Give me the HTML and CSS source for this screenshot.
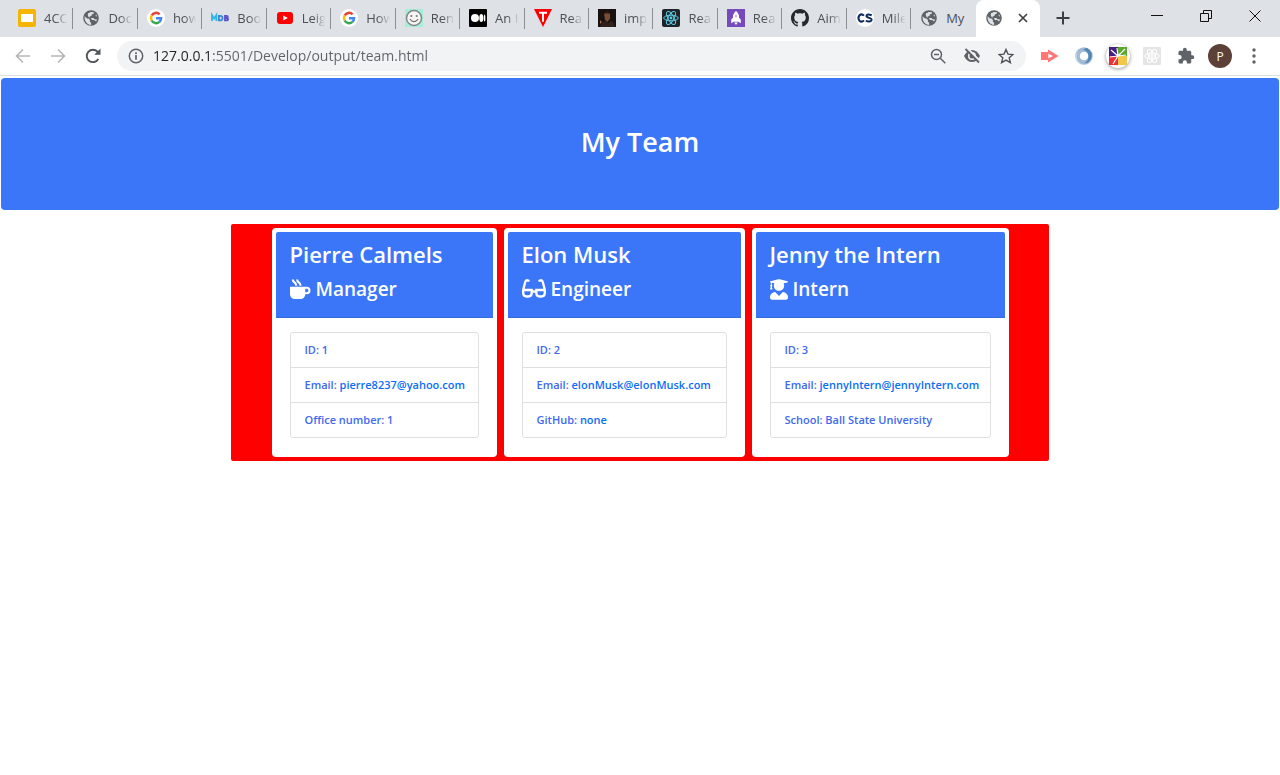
FILE: index.html
```html
<!DOCTYPE html>
<html lang="en">
<head>
<meta charset="utf-8">
<title>My Team</title>
<link rel="stylesheet" href="styles.css">
</head>
<body>
<svg class="defs" aria-hidden="true">
  <symbol id="globe" viewBox="0 0 18 18"><circle cx="9" cy="9" r="7.800" fill="#5f6368"/><path d="M2.600 7.200 5 9.400l1.600.2 1.300 1.500v1.600l1.200 1.100v2.100C5.300 15.900 2.300 12.600 2.600 7.200zM8 3.200c1.400-.5 3-.3 4.200.3l-.8 1.400-1.500.4-.5 1.700-1.900.5.4 1.400 3.600.1 1 1.300 2.500.1c.2-1 .3-2 .1-3l-1.500-.5.4-1.600c1.700 2.300 1.700 5.200.1 7.300l-2-1.500-2.200-.2-.8-1.700-2.600-1.200-.8-2.200.5-1.700 1.200-.1z" fill="#dee1e6"/></symbol>
  <symbol id="google" viewBox="0 0 18 18"><circle cx="9" cy="9" r="9" fill="#fff"/><g fill="none" stroke-width="2.500"><path d="M4.600 6.500A5.100 5.100 0 0 1 12.600 5.300" stroke="#ea4335"/><path d="M4.600 11.500a5.100 5.100 0 0 1 0-5" stroke="#fbbc05"/><path d="M12.400 12.900a5.100 5.100 0 0 1-7.800-1.400" stroke="#34a853"/><path d="M9 9.200h5.100a5.100 5.100 0 0 1-1.700 3.700" stroke="#4285f4"/></g></symbol>
</svg>

<header class="browser">
  <div class="strip">
    <nav class="tabs" aria-label="Tabs">
      <button class="tab"><svg viewBox="0 0 18 18"><rect width="18" height="18" rx="2" fill="#f4b400"/><rect x="3" y="5" width="12" height="8" fill="#fff"/></svg><span>4CC</span></button>
      <button class="tab"><svg><use href="#globe"/></svg><span>Doc</span></button>
      <button class="tab"><svg><use href="#google"/></svg><span>how</span></button>
      <button class="tab"><svg viewBox="0 0 18 18" fill="none" stroke-width="1.800"><path d="M1 12V6l2.200 3.500L5.400 6v6" stroke="#31b5e8"/><path d="M7.900 6.800h1.300q2.300 0 2.300 2.300t-2.300 2.200H7.900z" stroke="#3586d8"/><path d="M14 6.800h1.500q1.300 0 1.300 1t-1.300 1.200H14zm0 2.200h1.700q1.400 0 1.400 1.200t-1.400 1.100H14z" stroke="#5a50c8"/></svg><span>Boo</span></button>
      <button class="tab"><svg viewBox="0 0 18 18"><rect x="1" y="3" width="16" height="12" rx="3" fill="#f00"/><path d="M7.300 6.400v5.200L11.800 9z" fill="#fff"/></svg><span>Leig</span></button>
      <button class="tab"><svg><use href="#google"/></svg><span>How</span></button>
      <button class="tab"><svg viewBox="0 0 18 18"><path fill="#a5ecd9" d="M0 0h18v18H0z"/><circle cx="9" cy="9" r="7.500" fill="#f6f6f6" stroke="#858585" stroke-width="1.500"/><circle cx="6.300" cy="7" r="1.100" fill="#777"/><circle cx="11.700" cy="7" r="1.100" fill="#777"/><path d="M4.800 10.200q4.200 5 8.400 0" fill="none" stroke="#777" stroke-width="1.200"/></svg><span>Ren</span></button>
      <button class="tab"><svg viewBox="0 0 18 18"><rect width="18" height="18" rx="1"/><g fill="#fff"><circle cx="6" cy="9" r="4"/><ellipse cx="12.300" cy="9" rx="2" ry="3.900"/><ellipse cx="15.600" cy="9" rx=".8" ry="3.500"/></g></svg><span>An I</span></button>
      <button class="tab"><svg viewBox="0 0 18 18"><path d="M0 0h18L9 18z" fill="#f00"/><path d="M5 3.800h8M9 3.800v9" stroke="#fff" stroke-width="2"/></svg><span>Rea</span></button>
      <button class="tab"><svg viewBox="0 0 18 18"><path fill="#17110f" d="M0 0h18v18H0z"/><path d="M6 4.500q3-3 6 0v5L9.500 13 7 11z" fill="#7b4b32"/><path d="M5.500 5q4-6 7 0l-3-.8z" fill="#2c1a13"/><path d="M2 18q1-5 5-6l3 2 3-2q3 1 4 6z" fill="#30231d"/><path d="M2 11l2 2-2 2z" fill="#99664a"/></svg><span>imp</span></button>
      <button class="tab"><svg viewBox="0 0 18 18"><rect width="18" height="18" rx="2" fill="#202327"/><g fill="none" stroke="#5ccbe4"><ellipse cx="9" cy="9" rx="7.300" ry="2.800"/><ellipse cx="9" cy="9" rx="7.300" ry="2.800" transform="rotate(60 9 9)"/><ellipse cx="9" cy="9" rx="7.300" ry="2.800" transform="rotate(120 9 9)"/></g><circle cx="9" cy="9" r="1.400" fill="#5ccbe4"/></svg><span>Rea</span></button>
      <button class="tab"><svg viewBox="0 0 18 18"><path fill="#764abc" d="M0 0h18v18H0z"/><path d="M9 2q3.500 3 3 6.500l1.800 2.200v3.500l-2.600-1.400H6.800l-2.600 1.400v-3.500L6 8.500Q5.500 5 9 2zM7.200 13.500h3.600L9 16z" fill="#fff"/><circle cx="9" cy="7" r="1.200" fill="#c9b4e8"/></svg><span>Rea</span></button>
      <button class="tab"><svg viewBox="0 0 16 16"><path fill="#24292e" d="M8 0C3.580 0 0 3.580 0 8c0 3.540 2.290 6.530 5.470 7.590.4.070.55-.17.55-.38 0-.19-.01-.82-.01-1.490-2.010.37-2.530-.49-2.690-.94-.09-.23-.48-.94-.82-1.130-.28-.15-.68-.52-.01-.53.63-.01 1.080.58 1.230.82.72 1.210 1.870.87 2.330.66.070-.52.280-.87.510-1.070-1.780-.2-3.640-.89-3.640-3.950 0-.87.310-1.590.820-2.150-.08-.2-.36-1.020.08-2.120 0 0 .67-.21 2.200.82.640-.18 1.320-.27 2-.27s1.360.09 2 .27c1.530-1.040 2.200-.82 2.200-.82.440 1.100.160 1.920.080 2.120.510.560.820 1.270.820 2.150 0 3.070-1.870 3.750-3.650 3.950.290.250.540.730.540 1.480 0 1.070-.01 1.930-.01 2.200 0 .210.150.460.550.380A8.010 8.010 0 0 0 16 8c0-4.420-3.580-8-8-8z"/></svg><span>Aim</span></button>
      <button class="tab"><svg viewBox="0 0 18 18"><circle cx="9" cy="9" r="9" fill="#fff"/><g fill="none" stroke="#0d2a5c" stroke-width="2"><path d="M8 6.600Q5.600 4.300 3.500 6.200 1.300 9 3.500 11.800 5.600 13.700 8 11.400"/><path d="M15.700 6.300q-4.900-1.900-5.300.5c0 2.700 5.400 1.400 5.200 4.100-.4 2.300-4.200 1.900-5.700.5"/></g></svg><span>Mile</span></button>
      <button class="tab"><svg><use href="#globe"/></svg><span>My</span></button>
      <div class="tab tab-active"><svg><use href="#globe"/></svg><button class="close" aria-label="Close tab"><svg viewBox="0 0 12 12"><path d="m2 2 8 8M10 2l-8 8" stroke="#3c4043" stroke-width="1.700"/></svg></button></div>
    </nav>
    <button class="new-tab" aria-label="New tab"><svg viewBox="0 0 14 14"><path d="M7 .5v13M.5 7h13" stroke="#3c4043" stroke-width="2"/></svg></button>
    <div class="window-buttons">
      <button aria-label="Minimize"><svg viewBox="0 0 12 12"><path d="M0 5.500h12" stroke="#111"/></svg></button>
      <button aria-label="Restore"><svg viewBox="0 0 12 12" fill="none" stroke="#111"><path d="M.5 3.500h8v8h-8zM3.500 3.500v-3h8v8h-3"/></svg></button>
      <button aria-label="Close window"><svg viewBox="0 0 12 12"><path d="m.5.5 11 11M11.500.5l-11 11" stroke="#111"/></svg></button>
    </div>
  </div>

  <div class="toolbar">
    <div class="nav-buttons">
      <button aria-label="Back"><svg viewBox="0 0 16 16" fill="none" stroke="#b4b6b9" stroke-width="1.600"><path d="M15 8H2M8 1.500 1.500 8 8 14.500"/></svg></button>
      <button aria-label="Forward"><svg viewBox="0 0 16 16" fill="none" stroke="#b4b6b9" stroke-width="1.600"><path d="M1 8h13M8 1.500 14.500 8 8 14.500"/></svg></button>
      <button aria-label="Reload"><svg viewBox="0 0 16 16"><path d="M13.300 11A6.200 6.200 0 1 1 12.500 3.700L14 5.500" fill="none" stroke="#50545a" stroke-width="1.900"/><path d="M15.500.5v6.300H9.200z" fill="#50545a"/></svg></button>
    </div>
    <div class="address">
      <svg viewBox="0 0 16 16"><circle cx="8" cy="8" r="6.700" fill="none" stroke="#5f6368" stroke-width="1.500"/><path d="M8 7v4.700M8 4.200v1.700" stroke="#5f6368" stroke-width="1.700"/></svg>
      <input class="url" type="text" aria-label="Address" value="127.0.0.1:5501/Develop/output/team.html">
      <button aria-label="Zoom out"><svg viewBox="0 0 16 16" fill="none" stroke="#5f6368" stroke-width="1.500"><circle cx="6.500" cy="6.500" r="5"/><path d="m10.300 10.300 5 5M4 6.500h5"/></svg></button>
      <button aria-label="Third-party cookies blocked"><svg viewBox="1 0 16 16"><path d="M1 8q3-6 8-6t8 6q-3 6-8 6T1 8z" fill="#5f6368"/><circle cx="9" cy="8" r="4" fill="#f1f3f4"/><circle cx="9" cy="8" r="2.500" fill="#5f6368"/><path d="m4.500.5 13 13" stroke="#f1f3f4" stroke-width="2"/><path d="m2.500 1 13.500 13.500" stroke="#5f6368" stroke-width="1.800"/></svg></button>
      <button aria-label="Bookmark"><svg viewBox="0 0 16 16"><path d="m8 1.500 2 4.600 5 .4-3.800 3.300 1.200 4.900L8 12.100l-4.400 2.600 1.200-4.900L1 6.500l5-.4z" fill="none" stroke="#50545a" stroke-width="1.400"/></svg></button>
    </div>
    <div class="extensions">
      <button aria-label="Screen recorder"><svg viewBox="0 0 18 18"><path d="M0 5h6.500v8H0zM7 2.500 17.500 9 7 15.500v-4l5-2.500-5-2.500z" fill="#ff7676"/><path d="M6.500 5v8" stroke="#ff7676" stroke-width="1.500"/></svg></button>
      <button aria-label="Ring extension"><svg viewBox="0 0 18 18"><circle cx="9" cy="9" r="6.500" fill="none" stroke="#9fbad3" stroke-width="4.500"/><path d="M12 1q6 4 4.500 10-2 5-7.500 5.500 5-3 4.500-8T8 3q2-2 4-2z" fill="#4f86b5"/><path d="M3 4q-4 9 4 13-7-1-6.500-8Q1 6 3 4z" fill="#c9dceb"/></svg></button>
      <button class="raised" aria-label="Color extension"><svg viewBox="0 0 18 18"><path fill="#432082" d="M0 0h9v9H0z"/><path fill="#57a82b" d="M9 0h9v9H9z"/><path fill="#ee3036" d="M0 9h9v9H0z"/><path fill="#f3c74a" d="M9 9h9v9H9z"/><path d="M9 9 2 3M9 9 8 1M9 9l7-7M9 9l8-1M9 9l-5 8M9 9l-8 1" stroke="#fff" stroke-width="1.200"/></svg></button>
      <button aria-label="React developer tools"><svg viewBox="0 0 18 18"><rect width="18" height="18" rx="1" fill="#e5e5e5"/><g fill="none" stroke="#fff"><ellipse cx="9" cy="9" rx="7.300" ry="2.800"/><ellipse cx="9" cy="9" rx="7.300" ry="2.800" transform="rotate(60 9 9)"/><ellipse cx="9" cy="9" rx="7.300" ry="2.800" transform="rotate(120 9 9)"/></g><circle cx="9" cy="9" r="1.400" fill="#fff"/></svg></button>
      <button aria-label="Extensions"><svg viewBox="0 0 24 24"><path fill="#5f6368" d="M20.500 11H19V7c0-1.100-.9-2-2-2h-4V3.500a2.500 2.500 0 0 0-5 0V5H4c-1.100 0-2 .9-2 2v3.800h1.500a2.700 2.700 0 0 1 0 5.400H2V20c0 1.100.9 2 2 2h3.800v-1.500a2.700 2.700 0 0 1 5.400 0V22H17c1.100 0 2-.9 2-2v-4h1.500a2.500 2.500 0 0 0 0-5z"/></svg></button>
      <button class="avatar" aria-label="Profile">P</button>
      <button aria-label="Menu"><svg viewBox="0 0 18 18" fill="#5f6368"><circle cx="9" cy="3" r="1.700"/><circle cx="9" cy="9" r="1.700"/><circle cx="9" cy="15" r="1.700"/></svg></button>
    </div>
  </div>
</header>

<main class="page">
  <div class="banner"><h1>My Team</h1></div>
  <section class="team">
    <article class="card">
      <div class="card-header">
        <h2>Pierre Calmels</h2>
        <h3><svg class="mug" viewBox="0 0 22 22"><path d="M0 8h17.500a4 4 0 0 1 0 8H16a5 5 0 0 1-5 5H5a5 5 0 0 1-5-5zm16 2.200v3.600h1.500a1.800 1.800 0 0 0 0-3.600z" fill="#fff" fill-rule="evenodd"/><path d="M3 .5q0 2 1.700 3T6.500 7M7.500.5q0 2 1.700 3T11 7" fill="none" stroke="#fff" stroke-width="2.200"/></svg>Manager</h3>
      </div>
      <ul class="details">
        <li>ID: 1</li>
        <li>Email: <a href="mailto:pierre8237@yahoo.com">pierre8237@yahoo.com</a></li>
        <li>Office number: 1</li>
      </ul>
    </article>
    <article class="card">
      <div class="card-header">
        <h2>Elon Musk</h2>
        <h3><svg class="glasses" viewBox="0 0 24 22" fill="none" stroke="#fff" stroke-width="2.300"><path d="M7.500 3 5.500 2.300Q3.700 2 3.200 4L1.200 12v3q0 3.500 3.500 3.500h1.500q3.500 0 3.500-3.500v-3H1.200M16.500 3l2-.7q1.800-.3 2.300 1.700l2 8v3q0 3.500-3.500 3.500h-1.500q-3.500 0-3.500-3.500v-3h8.500M9.700 13.500h4.600"/></svg>Engineer</h3>
      </div>
      <ul class="details">
        <li>ID: 2</li>
        <li>Email: <a href="mailto:elonMusk@elonMusk.com">elonMusk@elonMusk.com</a></li>
        <li>GitHub: <a href="#">none</a></li>
      </ul>
    </article>
    <article class="card">
      <div class="card-header">
        <h2>Jenny the Intern</h2>
        <h3><svg class="graduate" viewBox="0 0 448 512"><path fill="#fff" d="M319.400 320.600 224 416l-95.400-95.400C57.100 323.700 0 382.200 0 454.400v9.600c0 26.500 21.500 48 48 48h352c26.500 0 48-21.500 48-48v-9.600c0-72.200-57.100-130.700-128.600-133.800zM13.600 79.800l6.400 1.500v58.400c-7 4.200-12 11.500-12 20.300 0 8.400 4.600 15.400 11.100 19.700L3.500 242c-1.700 6.900 2.100 14 7.600 14h41.800c5.500 0 9.300-7.100 7.600-14l-15.600-62.300C51.400 175.400 56 168.400 56 160c0-8.800-5-16.100-12-20.300V87.100l66 15.900c-8.600 17.200-14 36.400-14 57 0 70.700 57.300 128 128 128s128-57.300 128-128c0-20.600-5.300-39.800-14-57l96.300-23.200c18.200-4.400 18.200-27.100 0-31.500l-190.400-46c-13-3.100-26.700-3.100-39.700 0L13.600 48.200c-18.100 4.400-18.100 27.200 0 31.600z"/></svg>Intern</h3>
      </div>
      <ul class="details">
        <li>ID: 3</li>
        <li>Email: <a href="mailto:jennyIntern@jennyIntern.com">jennyIntern@jennyIntern.com</a></li>
        <li>School: Ball State University</li>
      </ul>
    </article>
  </section>
</main>
</body>
</html>
```
FILE: styles.css
```css
* { box-sizing: border-box; }
body {
  margin: 0;
  background: #fff;
  font-family: "Open Sans", "Noto Sans", sans-serif;
}
button {
  border: 0;
  padding: 0;
  background: none;
  font: inherit;
  color: inherit;
}
svg { display: block; flex: none; }
.defs { position: absolute; width: 0; height: 0; }

.strip {
  display: flex;
  height: 37px;
  background: #dee1e6;
}
.tabs {
  display: flex;
  width: 81.25%;
  padding-left: 9px;
}
.tab {
  flex: 1 1 0;
  min-width: 0;
  display: flex;
  align-items: center;
  gap: 8px;
  padding: 0 1px 1px 9px;
  font-size: 13px;
  color: #4c5054;
  background: linear-gradient(#8b8e92, #8b8e92) right 8px / 1px 21px no-repeat;
}
.tab svg { width: 18px; height: 18px; }
.tab span {
  flex: 1;
  min-width: 0;
  overflow: hidden;
  white-space: nowrap;
  text-align: left;
  mask-image: linear-gradient(90deg, #000 40%, transparent 84%);
}
.tab:nth-last-child(2) { background: none; }
.tab:nth-last-child(2) span { mask-image: none; }
.tab-active {
  gap: 14px;
  background: #fff;
  border-radius: 8px 8px 0 0;
}
.tab .close svg { width: 12px; height: 12px; }
.new-tab { padding: 0 16px 2px; }
.new-tab svg { width: 14px; height: 14px; }
.window-buttons {
  display: flex;
  gap: 37px;
  margin-left: auto;
  padding: 0 19px 6px 0;
}
.window-buttons svg { width: 12px; height: 12px; }

.toolbar {
  display: flex;
  align-items: center;
  height: 39px;
  padding: 0 14px 0 15px;
  border-bottom: 1px solid #dcdee1;
}
.nav-buttons { display: flex; gap: 19px; margin-right: 16px; }
.nav-buttons svg { width: 16px; height: 16px; }
.address {
  flex: 1;
  min-width: 0;
  display: flex;
  align-items: center;
  gap: 18px;
  height: 30px;
  padding: 0 12px 0 11px;
  border-radius: 15px;
  background: #f1f3f4;
}
.address svg { width: 16px; height: 16px; }
.url {
  flex: 1;
  min-width: 0;
  margin-left: -9px;
  padding: 0;
  border: 0;
  outline: 0;
  font: 14px/20px "Open Sans", "Noto Sans", sans-serif;
  color: transparent;
  background: linear-gradient(90deg, #202124 58px, #5f6368 58px);
  background-clip: text;
}
.extensions {
  display: flex;
  align-items: center;
  gap: 10px;
  margin-left: 12px;
}
.extensions button {
  display: grid;
  place-items: center;
  width: 24px;
  height: 24px;
}
.extensions svg { width: 18px; height: 18px; }
.extensions .raised {
  border-radius: 50%;
  box-shadow: 0 1px 3px 1px #bbb;
}
.extensions .avatar {
  border-radius: 50%;
  background: #5d4037;
  color: #fff;
  font-size: 12px;
}

.page { padding: 2px 1px; }
.banner {
  display: grid;
  place-items: center;
  height: 132px;
  padding-bottom: 4px;
  border-radius: 4px;
  background: #3b76f8;
  color: #fff;
}
h1, h2, h3 { margin: 0; font-weight: 600; }
h1 { font-size: 27px; line-height: 34px; }
.team {
  display: grid;
  grid-template-columns: 225px 241px 257px;
  justify-content: center;
  gap: 7px;
  width: 64%;
  margin: 14px auto 0;
  padding: 4px;
  border-radius: 2px;
  background: #f00;
}
.card {
  padding: 4px 4px 19px;
  border-radius: 4px;
  background: #fff;
}
.card-header {
  height: 86px;
  padding: 8px 14px;
  border-bottom: 1px solid #356adf;
  border-radius: 2px 2px 0 0;
  background: #3b76f8;
  color: #fff;
}
h2 { font-size: 22px; line-height: 28px; margin-bottom: 8px; }
h3 {
  display: flex;
  align-items: center;
  gap: 5px;
  font-size: 19px;
  line-height: 26px;
}
.mug { width: 21px; height: 21px; }
.glasses { width: 24px; height: 22px; }
.graduate { width: 18px; height: 21px; }
.details {
  list-style: none;
  margin: 14px 14px 0;
  padding: 0;
  border: 1px solid #dfdfdf;
  border-radius: 3px;
  font-size: 11px;
  font-weight: 600;
  line-height: 18px;
  color: #4169f0;
}
.details li { padding: 8px 14px; white-space: nowrap; }
.details li + li { border-top: 1px solid #dfdfdf; }
.details a { color: #0b6ef8; text-decoration: none; }
```
